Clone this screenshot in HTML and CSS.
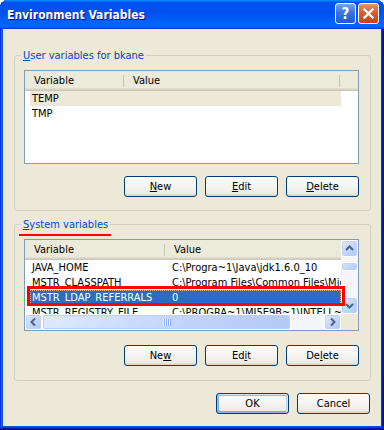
FILE: index.html
```html
<!DOCTYPE html>
<html lang="en">
<head>
    <meta charset="UTF-8">
    <title>Environment Variables</title>
    <link rel="stylesheet" href="styles.css">
</head>
<body>

    <div class="window">
        <div class="titlebar">
            <span class="title">Environment Variables</span>
            <div class="title-buttons">
                <span class="tb-btn help">?</span>
                <span class="tb-btn close">
                    <svg width="19" height="19" viewBox="0 0 19 19">
                        <path d="M5.5 5.5 L13.5 13.5 M13.5 5.5 L5.5 13.5" stroke="#fff" stroke-width="2.4" stroke-linecap="square"/>
                    </svg>
                </span>
            </div>
        </div>

        <div class="client">
            <!-- متغيرات المستخدم -->
            <fieldset class="group">
                <legend><u>U</u>ser variables for bkane</legend>
                <div class="listview user-list">
                    <div class="lv-header">
                        <div class="lv-col c1">Variable</div>
                        <div class="lv-col c2">Value</div>
                        <div class="lv-col rest"></div>
                    </div>
                    <div class="lv-row inactive-sel"><span class="c1">TEMP</span><span class="c2"></span></div>
                    <div class="lv-row"><span class="c1">TMP</span><span class="c2"></span></div>
                </div>
                <div class="btn-row">
                    <button class="xp-btn"><u>N</u>ew</button>
                    <button class="xp-btn"><u>E</u>dit</button>
                    <button class="xp-btn"><u>D</u>elete</button>
                </div>
            </fieldset>

            <!-- متغيرات النظام -->
            <fieldset class="group second">
                <legend><u>S</u>ystem variables</legend>
                <div class="listview sys-list">
                    <div class="lv-main">
                        <div class="lv-header">
                            <div class="lv-col c1">Variable</div>
                            <div class="lv-col c2">Value</div>
                        </div>
                        <div class="lv-row"><span class="c1">JAVA_HOME</span><span class="c2">C:\Progra~1\Java\jdk1.6.0_10</span></div>
                        <div class="lv-row"><span class="c1">MSTR_CLASSPATH</span><span class="c2">C:\Program Files\Common Files\MicroStrategy\JavaClasses</span></div>
                        <div class="lv-row selected"><span class="c1">MSTR_LDAP_REFERRALS</span><span class="c2">0</span></div>
                        <div class="lv-row"><span class="c1">MSTR_REGISTRY_FILE</span><span class="c2">C:\PROGRA~1\MI5E9B~1\INTELL~1\registry</span></div>
                    </div>
                    <div class="vscroll">
                        <span class="sb-btn">
                            <svg width="15" height="15" viewBox="0 0 15 15"><path d="M4 9 L7.5 5.5 L11 9" fill="none" stroke="#4d6185" stroke-width="2"/></svg>
                        </span>
                        <span class="sb-thumb v-thumb"></span>
                        <span class="sb-track"></span>
                        <span class="sb-btn">
                            <svg width="15" height="15" viewBox="0 0 15 15"><path d="M4 6 L7.5 9.5 L11 6" fill="none" stroke="#4d6185" stroke-width="2"/></svg>
                        </span>
                    </div>
                    <div class="hscroll">
                        <span class="sb-btn">
                            <svg width="15" height="14" viewBox="0 0 15 14"><path d="M9 3.5 L5.5 7 L9 10.5" fill="none" stroke="#4d6185" stroke-width="2"/></svg>
                        </span>
                        <span class="sb-thumb h-thumb"><span class="grip"></span></span>
                        <span class="sb-track"></span>
                        <span class="sb-btn">
                            <svg width="15" height="14" viewBox="0 0 15 14"><path d="M6 3.5 L9.5 7 L6 10.5" fill="none" stroke="#4d6185" stroke-width="2"/></svg>
                        </span>
                    </div>
                    <div class="corner"></div>
                </div>
                <div class="btn-row sys-btns">
                    <button class="xp-btn">Ne<u>w</u></button>
                    <button class="xp-btn">Ed<u>i</u>t</button>
                    <button class="xp-btn">De<u>l</u>ete</button>
                </div>
            </fieldset>

            <div class="dialog-buttons">
                <button class="xp-btn default">OK</button>
                <button class="xp-btn">Cancel</button>
            </div>
        </div>

        <!-- علامات حمراء فوق الصورة -->
        <div class="mark mark-line"></div>
        <div class="mark mark-box"></div>
    </div>

</body>
</html>
```

FILE: styles.css
```css
body {
    margin: 0;
    background: #fff;
    font-family: "DejaVu Sans Condensed", "DejaVu Sans", sans-serif;
    font-stretch: condensed;
    font-size: 11px;
    color: #000;
}

/* الإطار */
.window {
    position: relative;
    width: 384px;
    height: 430px;
    box-sizing: border-box;
    display: flex;
    flex-direction: column;
    padding: 0 3px 4px;
    background: #0855dd;
    border-radius: 8px 8px 0 0;
    box-shadow: inset -1px -1px #00138c, inset 1px 0 #0831d9,
                inset -2px -2px #001ea0, inset 2px 0 #166aee,
                inset -3px -3px #003bda, inset 3px 0 #0855dd;
}

.titlebar {
    height: 29px;
    margin: 0 -3px;
    display: flex;
    justify-content: space-between;
    align-items: flex-start;
    border-radius: 8px 8px 0 0;
    background: linear-gradient(180deg, #0997ff, #0053ee 8%, #0050ee 40%, #06f 88%, #06f 93%, #005bff 95%, #003dd7 96%, #003dd7);
}

.title {
    padding: 8px 0 0 7px;
    color: #fff;
    font-weight: bold;
    font-size: 12px;
    text-shadow: 1px 1px #0f1089;
}

.title-buttons {
    display: flex;
    gap: 2px;
    margin: 3px 5px 0 0;
}

.tb-btn {
    width: 21px;
    height: 21px;
    box-sizing: border-box;
    border: 1px solid #fff;
    border-radius: 3px;
    display: flex;
    align-items: center;
    justify-content: center;
    color: #fff;
}

.tb-btn.help {
    background: linear-gradient(180deg, #7aa4f6, #3b72e6 45%, #2459d8);
    font-family: "DejaVu Sans", sans-serif;
    font-weight: bold;
    font-size: 15px;
}

.tb-btn.close {
    background: linear-gradient(180deg, #ec9270, #df5a2c 45%, #c9401a);
}

.client {
    flex: 1;
    background: #ece9d8;
    padding: 0 10px 0 11px;
    display: flex;
    flex-direction: column;
}

/* المجموعات */
.group {
    margin: 20px 0 0;
    padding: 8px 11px 13px 9px;
    border: 1px solid #d0d0bf;
    border-radius: 3px;
    min-width: 0;
}

.group.second {
    margin-top: 7px;
}

.group.second .btn-row {
    margin-top: 14px;
}

.group.second {
    padding-bottom: 14px;
}

.group legend {
    color: #0046d5;
    line-height: 13px;
    padding: 0 2px;
    margin-left: -3px;
}

/* القوائم */
.listview {
    box-sizing: border-box;
    border: 1px solid #7f9db9;
    background: #fff;
    overflow: hidden;
}

.user-list {
    height: 94px;
}

.sys-list {
    height: 92px;
    display: grid;
    grid-template-columns: 316px 17px;
    grid-template-rows: 74px 16px;
}

.lv-main {
    overflow: hidden;
}

.lv-header {
    display: flex;
    height: 20px;
    box-sizing: border-box;
    background: #ebeadb;
    box-shadow: inset 0 -1px #cbc7b8, inset 0 -2px #d6d2c2, inset 0 -3px #e2decd;
}

.lv-col {
    box-sizing: border-box;
    padding-left: 9px;
    line-height: 19px;
    background: linear-gradient(#c7c5b2, #c7c5b2) right 4px / 1px 12px no-repeat;
}

.lv-col.rest {
    flex: 1;
    background: none;
}

.user-list .lv-col.c1 { width: 99px; }
.user-list .lv-col.c2 { width: 216px; }
.sys-list .lv-col.c1 { width: 140px; }
.sys-list .lv-col.c2 { flex: 1; background: none; }

.lv-row {
    display: flex;
    height: 15px;
    line-height: 15px;
    margin-left: 5px;
    width: 311px;
    white-space: nowrap;
    overflow: hidden;
}

.lv-row .c1 {
    flex: none;
    padding-left: 2px;
    box-sizing: border-box;
}

.user-list .lv-row .c1 { width: 94px; }
.sys-list .lv-row .c1 { width: 135px; }

.lv-row .c2 {
    padding-left: 7px;
    overflow: hidden;
}

.lv-row.inactive-sel {
    background: #ece9d8;
}

.lv-row.selected {
    background: #316ac5;
    color: #fff;
    outline: 1px dotted #d7b98a;
    outline-offset: -1px;
}

/* أشرطة التمرير */
.vscroll {
    display: flex;
    flex-direction: column;
    background: #f4f5f9;
}

.hscroll {
    display: flex;
    background: #f4f5f9;
}

.corner {
    background: #ece9d8;
}

.sb-btn,
.sb-thumb {
    box-sizing: border-box;
    border: 1px solid #fff;
    border-radius: 3px;
    background: linear-gradient(135deg, #e1eafe, #c6d6fb 50%, #b2c8f5);
    box-shadow: inset 0 0 0 1px #bccff7;
    display: flex;
    align-items: center;
    justify-content: center;
    flex: none;
}

.vscroll .sb-btn {
    width: 17px;
    height: 17px;
}

.hscroll .sb-btn {
    width: 17px;
    height: 16px;
}

.v-thumb {
    height: 9px;
    margin-top: 5px;
}

.h-thumb {
    width: 249px;
}

.sb-track {
    flex: 1;
}

.grip {
    width: 8px;
    height: 7px;
    background: repeating-linear-gradient(90deg, #eef4fe 0 1px, #8cb0f8 1px 2px);
}

/* الأزرار */
.btn-row {
    display: flex;
    justify-content: flex-end;
    gap: 8px;
    margin-top: 12px;
}

.xp-btn {
    width: 73px;
    height: 21px;
    padding: 0;
    border: 1px solid #003c74;
    border-radius: 3px;
    background: linear-gradient(180deg, #fff, #ecebe6 86%, #d6d0c5);
    font-family: inherit;
    font-stretch: condensed;
    font-size: 11px;
    color: #000;
}

.xp-btn.default {
    box-shadow: inset -1px 1px #cee7ff, inset 1px 2px #98b8ea,
                inset -2px 2px #bcd4f6, inset 1px -1px #89ade4,
                inset 2px -2px #89ade4;
}

.dialog-buttons {
    display: flex;
    justify-content: flex-end;
    gap: 8px;
    margin: 12px 1px 0 0;
}

/* العلامات الحمراء */
.mark {
    position: absolute;
}

.mark-line {
    left: 19px;
    top: 234px;
    width: 92px;
    height: 2px;
    background: #f00;
}

.mark-box {
    left: 27px;
    top: 286px;
    width: 318px;
    height: 20px;
    box-sizing: border-box;
    border: 3px solid #f00;
}
```
